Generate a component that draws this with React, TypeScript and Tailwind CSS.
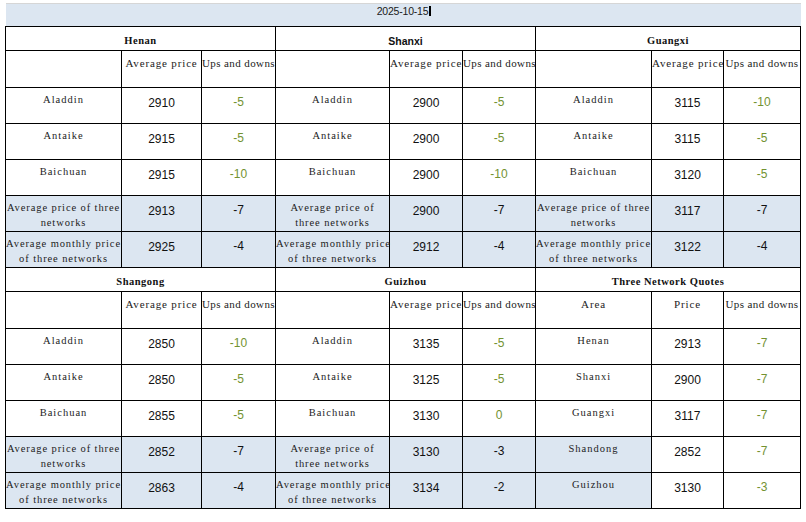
import React from "react";

const BLUE = "bg-[#dce6f1]";

type Row = { label: string[]; price: string; chg: string; blue: boolean; green: boolean };

type Section = { title: string; sans?: boolean; rows: Row[] };

const mk = (a: [string, string], b: [string, string], c: [string, string], avg: [string, string], mon: [string, string], narrow = false): Row[] => [
  { label: ["Aladdin"], price: a[0], chg: a[1], blue: false, green: true },
  { label: ["Antaike"], price: b[0], chg: b[1], blue: false, green: true },
  { label: ["Baichuan"], price: c[0], chg: c[1], blue: false, green: true },
  {
    label: narrow ? ["Average price of", "three networks"] : ["Average price of three", "networks"],
    price: avg[0],
    chg: avg[1],
    blue: true,
    green: false,
  },
  { label: ["Average monthly price", "of three networks"], price: mon[0], chg: mon[1], blue: true, green: false },
];

const top: Section[] = [
  { title: "Henan", rows: mk(["2910", "-5"], ["2915", "-5"], ["2915", "-10"], ["2913", "-7"], ["2925", "-4"]) },
  { title: "Shanxi", sans: true, rows: mk(["2900", "-5"], ["2900", "-5"], ["2900", "-10"], ["2900", "-7"], ["2912", "-4"], true) },
  { title: "Guangxi", rows: mk(["3115", "-10"], ["3115", "-5"], ["3120", "-5"], ["3117", "-7"], ["3122", "-4"]) },
];

const bottom: Section[] = [
  { title: "Shangong", rows: mk(["2850", "-10"], ["2850", "-5"], ["2855", "-5"], ["2852", "-7"], ["2863", "-4"]) },
  { title: "Guizhou", rows: mk(["3135", "-5"], ["3125", "-5"], ["3130", "0"], ["3130", "-3"], ["3134", "-2"], true) },
  {
    title: "Three Network Quotes",
    rows: [
      { label: ["Henan"], price: "2913", chg: "-7", blue: false, green: true },
      { label: ["Shanxi"], price: "2900", chg: "-7", blue: false, green: true },
      { label: ["Guangxi"], price: "3117", chg: "-7", blue: false, green: true },
      { label: ["Shandong"], price: "2852", chg: "-7", blue: true, green: true },
      { label: ["Guizhou"], price: "3130", chg: "-3", blue: true, green: true },
    ],
  },
];

const serif = "font-['Liberation_Serif','Times_New_Roman',serif]";
const sans = "font-['Liberation_Sans',Arial,sans-serif]";
const cellB = "border border-black p-0 align-top";

function LabelCell({ lines, blue }: { lines: string[]; blue: boolean }) {
  const long = lines.length > 1;
  return (
    <td className={`${cellB} ${blue ? BLUE : "bg-white"} text-center`}>
      <div
        className={`${serif} ${long ? "pt-[5px] text-[10.5px] tracking-[0.9px] leading-[14.5px]" : "pt-[5px] text-[10.5px] tracking-[1px] leading-[14px]"} text-[#1c1c1c] whitespace-nowrap`}
      >
        {lines.map((l, i) => (
          <div key={i}>{l}</div>
        ))}
      </div>
    </td>
  );
}

function NumCell({ v, blue }: { v: string; blue: boolean }) {
  return (
    <td className={`${cellB} ${blue ? BLUE : "bg-white"} text-center`}>
      <div className={`${sans} pt-[8px] text-[12px] leading-[14px] text-[#111]`}>{v}</div>
    </td>
  );
}

function ChgCell({ v, blue, green }: { v: string; blue: boolean; green: boolean }) {
  return (
    <td className={`${cellB} ${blue && !green ? BLUE : "bg-white"} text-center`}>
      <div
        className={`${sans} pt-[7px] text-[12px] leading-[14px] ${green ? "text-[#739231]" : "text-[#111]"}`}
      >
        {v}
      </div>
    </td>
  );
}

function HeaderText({ t, wide }: { t: string; wide?: boolean }) {
  return (
    <td className={`${cellB} bg-white text-center`}>
      <div
        className={`${serif} ${wide ? "tracking-[0.85px]" : "tracking-[0.4px]"} pt-[5px] text-[11px] leading-[14px] text-[#1c1c1c] whitespace-nowrap`}
      >
        {t}
      </div>
    </td>
  );
}

function Half({ sections }: { sections: Section[] }) {
  return (
    <>
      <tr className="h-[24px]">
        {sections.map((s) => (
          <td key={s.title} colSpan={3} className={`${cellB} bg-white text-center`}>
            <div
              className={`${s.sans ? sans + " text-[10.5px]" : serif + " text-[10.5px] tracking-[0.5px]"} font-bold pt-[7px] leading-[14px] text-[#111]`}
            >
              {s.title}
            </div>
          </td>
        ))}
      </tr>
      <tr className="h-[37px]">
        {sections.map((s, i) =>
          i === 2 && s.title === "Three Network Quotes" ? (
            <React.Fragment key={i}>
              <HeaderText t="Area" wide />
              <HeaderText t="Price" wide />
              <HeaderText t="Ups and downs" />
            </React.Fragment>
          ) : (
            <React.Fragment key={i}>
              <td className={`${cellB} bg-white`} />
              <HeaderText t="Average price" wide />
              <HeaderText t="Ups and downs" />
            </React.Fragment>
          )
        )}
      </tr>
      {[0, 1, 2, 3, 4].map((r) => (
        <tr key={r} className="h-[36px]">
          {sections.map((s, i) => {
            const row = s.rows[r];
            const isQuote = s.title === "Three Network Quotes";
            return (
              <React.Fragment key={i}>
                <LabelCell lines={row.label} blue={row.blue} />
                <NumCell v={row.price} blue={row.blue && !isQuote} />
                <ChgCell v={row.chg} blue={row.blue && !isQuote} green={row.green} />
              </React.Fragment>
            );
          })}
        </tr>
      ))}
    </>
  );
}

export default function App() {
  const widths = ["w-[116px]", "w-[80px]", "w-[74px]", "w-[114px]", "w-[73px]", "w-[73px]", "w-[116px]", "w-[72px]", "w-[77px]"];
  return (
    <div className="w-[806px] h-[522px] bg-white pt-[3px] pl-[5px]">
      <table className="table-fixed border-collapse w-[795px]">
        <colgroup>
          {widths.map((w, i) => (
            <col key={i} className={w} />
          ))}
        </colgroup>
        <tbody>
          <tr className="h-[23px]">
            <td colSpan={9} className={`p-0 align-top ${BLUE} border-t border-t-[#d6d6d6] border-b border-b-black text-center`}>
              <div className="flex items-start justify-center pt-[2px] pl-[2px]">
                <span className={`${sans} text-[10.5px] leading-[11px] text-[#1a1a1a] tracking-[-0.2px]`}>2025-10-15</span>
                <span className="ml-[1px] w-[2px] h-[10px] bg-black" />
              </div>
            </td>
          </tr>
          <Half sections={top} />
          <Half sections={bottom} />
        </tbody>
      </table>
    </div>
  );
}
